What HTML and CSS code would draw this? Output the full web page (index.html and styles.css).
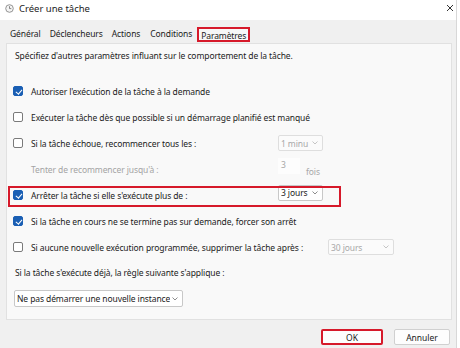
FILE: index.html
```html
<!DOCTYPE html>
<html lang="fr">
<head>
<meta charset="utf-8">
<title>Créer une tâche</title>
<link rel="stylesheet" href="styles.css">
</head>
<body>
<div class="window">
  <div class="titlebar">
    <svg class="appicon" width="9" height="9" viewBox="0 0 9 9"><circle cx="4.5" cy="4.5" r="3.8" fill="#f4f4f4" stroke="#8a8a8a" stroke-width="0.9"/><path d="M4.5 2.2V4.6H6.3" fill="none" stroke="#6a6a6a" stroke-width="0.8"/></svg>
    <span class="title">Créer une tâche</span>
    <svg class="close" width="8" height="8" viewBox="0 0 8 8"><path d="M1 1L7 7M7 1L1 7" stroke="#333" stroke-width="1"/></svg>
  </div>
  <div class="client">
    <div class="tabs">
      <span class="tab t1">Général</span>
      <span class="tab t2">Déclencheurs</span>
      <span class="tab t3">Actions</span>
      <span class="tab t4">Conditions</span>
      <span class="tab t5 active">Paramètres</span>
    </div>
    <div class="panel">
      <p class="desc">Spécifiez d'autres paramètres influant sur le comportement de la tâche.</p>
      <div class="rows">
        <div class="row"><span class="cb on"></span><span class="label">Autoriser l'exécution de la tâche à la demande</span></div>
        <div class="row"><span class="cb"></span><span class="label">Exécuter la tâche dès que possible si un démarrage planifié est manqué</span></div>
        <div class="row"><span class="cb"></span><span class="label w1">Si la tâche échoue, recommencer tous les :</span><span class="dd disabled w45"><span class="ddt">1 minu</span><svg class="chev" width="6" height="4" viewBox="0 0 6 4"><path d="M0.5 0.5L3 3L5.5 0.5" fill="none" stroke="currentColor" stroke-width="0.8"/></svg></span></div>
        <div class="row"><span class="cbspace"></span><span class="label w1 gray">Tenter de recommencer jusqu'à :</span><span class="num">3</span><span class="fois">fois</span></div>
        <div class="row hl"><span class="cb on"></span><span class="label w1">Arrêter la tâche si elle s'exécute plus de :</span><span class="dd w45"><span class="ddt">3 jours</span><svg class="chev" width="6" height="4" viewBox="0 0 6 4"><path d="M0.5 0.5L3 3L5.5 0.5" fill="none" stroke="currentColor" stroke-width="0.8"/></svg></span></div>
        <div class="row"><span class="cb on"></span><span class="label">Si la tâche en cours ne se termine pas sur demande, forcer son arrêt</span></div>
        <div class="row"><span class="cb"></span><span class="label w2">Si aucune nouvelle exécution programmée, supprimer la tâche après :</span><span class="dd disabled w66"><span class="ddt">30 jours</span><svg class="chev" width="6" height="4" viewBox="0 0 6 4"><path d="M0.5 0.5L3 3L5.5 0.5" fill="none" stroke="currentColor" stroke-width="0.8"/></svg></span></div>
      </div>
      <p class="rule">Si la tâche s'exécute déjà, la règle suivante s'applique :</p>
      <span class="dd big"><span class="ddt">Ne pas démarrer une nouvelle instance</span><svg class="chev" width="6" height="4" viewBox="0 0 6 4"><path d="M0.5 0.5L3 3L5.5 0.5" fill="none" stroke="currentColor" stroke-width="0.8"/></svg></span>
    </div>
    <div class="footer">
      <button class="btn ok">OK</button>
      <button class="btn">Annuler</button>
    </div>
  </div>
</div>
</body>
</html>
```
FILE: styles.css
```css
* { box-sizing: border-box; }
html, body { margin: 0; padding: 0; }
body {
  width: 460px;
  height: 348px;
  background: #ffffff;
  font-family: "Noto Sans", "Open Sans", sans-serif;
  font-size: 8.5px;
  letter-spacing: -0.1px;
  color: #1b1b1b;
  overflow: hidden;
}
.window {
  width: 457px;
  height: 348px;
  border-right: 1px solid #d8d8d8;
  display: flex;
  flex-direction: column;
}
.titlebar {
  height: 20px;
  background: #fff;
  display: flex;
  align-items: center;
  padding-left: 5px;
  padding-right: 2px;
}
.appicon { margin-right: 5px; margin-top: -3px; }
.title { font-size: 9.5px; letter-spacing: 0; color: #222; margin-top: -4px; flex: 1; }
.close { margin-top: -5px; }
.client {
  flex: 1;
  background: #f0f0f0;
  display: flex;
  flex-direction: column;
}
.tabs {
  height: 23px;
  display: flex;
  align-items: flex-end;
  padding-left: 10px;
  padding-bottom: 1px;
}
.tab {
  height: 15px;
  line-height: 13px;
  color: #1b1b1b;
  white-space: nowrap;
}
.t1 { margin-right: 9px; }
.t2 { margin-right: 9px; }
.t3 { margin-right: 10px; }
.t4 { margin-right: 5px; }
.tab.active {
  border: 2px solid #d6192a;
  padding: 0 2px;
  background: #f7f7f7;
}
.panel {
  margin: 0 4px 0 6px;
  height: 277px;
  background: #f9f9f9;
  border: 1px solid #e1e1e1;
  padding: 0 6px;
}
.desc { margin: 6px 0 0 2px; line-height: 12px; }
.rows {
  margin-top: 16px;
  display: flex;
  flex-direction: column;
}
.row {
  height: 26px;
  display: flex;
  align-items: center;
  position: relative;
  white-space: nowrap;
}
.cb, .cbspace {
  width: 10px;
  height: 10px;
  flex: none;
  margin-right: 8px;
}
.cb {
  border: 1px solid #7a7a7a;
  border-radius: 2px;
  background: #fff;
  position: relative;
}
.cb.on {
  background: #1a5fb4;
  border-color: #1a5fb4;
}
.cb.on::after {
  content: "";
  position: absolute;
  left: 2.5px;
  top: 0.5px;
  width: 2.5px;
  height: 5px;
  border: solid #fff;
  border-width: 0 1.2px 1.2px 0;
  transform: rotate(40deg);
}
.label { flex: none; }
.label.w1 { width: 247px; }
.label.w2 { width: 297px; }
.gray { color: #a4a4a4; }
.dd {
  display: inline-flex;
  align-items: center;
  height: 16px;
  background: #fff;
  border: 1px solid #c8c8c8;
  border-radius: 2px;
  padding: 0 4px 0 2px;
  color: #1b1b1b;
  overflow: hidden;
}
.dd .ddt { flex: 1; overflow: hidden; white-space: nowrap; }
.dd .chev { flex: none; color: #707070; margin-left: 2px; }
.dd.disabled { color: #a8a8a8; background: #fbfbfb; border-color: #dedede; }
.dd.disabled .chev { color: #b8b8b8; }
.w45 { width: 45px; }
.w66 { width: 66px; }
.num {
  width: 22px;
  height: 16px;
  line-height: 14px;
  background: #fdfdfd;
  color: #a8a8a8;
  padding-left: 3px;
  margin-top: -6px;
}
.fois { color: #a8a8a8; margin-left: 6px; margin-top: 4px; }
.row.hl::after {
  content: "";
  position: absolute;
  left: -5px;
  top: 4px;
  width: 329px;
  height: 17px;
  border: 2px solid #d6192a;
}
.row.hl .dd { margin-top: -5px; }
.rule { margin: 7px 0 0 2px; line-height: 12px; }
.dd.big {
  margin-top: 11px;
  margin-left: 1px;
  width: 169px;
  height: 17px;
}
.footer {
  flex: 1;
  display: flex;
  justify-content: flex-end;
  align-items: flex-start;
  padding: 9px 6px 0 0;
  gap: 11px;
}
.btn {
  font-family: inherit;
  font-size: 8.5px;
  height: 16px;
  background: #fdfdfd;
  border: 1px solid #d0d0d0;
  border-radius: 2px;
  color: #1b1b1b;
  padding: 0;
  width: 56px;
}
.btn.ok {
  width: 62px;
  border: 2px solid #d6192a;
}
```
